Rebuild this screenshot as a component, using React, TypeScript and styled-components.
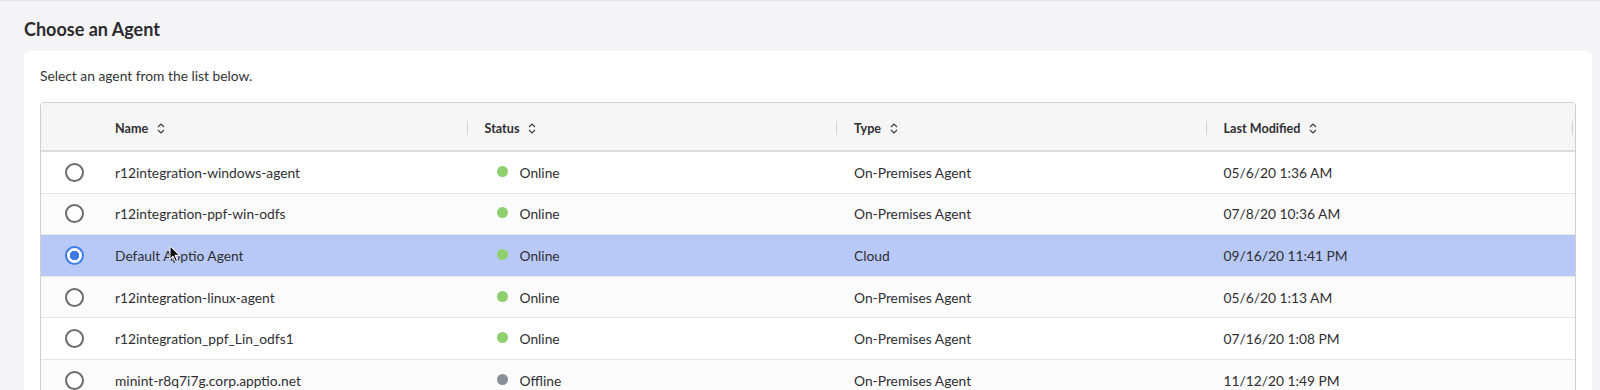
import React from "react";
import styled, { createGlobalStyle } from "styled-components";

interface Agent {
  name: string,
  status: "Online" | "Offline",
  type: string,
  modified: string,
}

const agents: Agent[] = [
  { name: "r12integration-windows-agent", status: "Online", type: "On-Premises Agent", modified: "05/6/20 1:36 AM" },
  { name: "r12integration-ppf-win-odfs", status: "Online", type: "On-Premises Agent", modified: "07/8/20 10:36 AM" },
  { name: "Default Apptio Agent", status: "Online", type: "Cloud", modified: "09/16/20 11:41 PM" },
  { name: "r12integration-linux-agent", status: "Online", type: "On-Premises Agent", modified: "05/6/20 1:13 AM" },
  { name: "r12integration_ppf_Lin_odfs1", status: "Online", type: "On-Premises Agent", modified: "07/16/20 1:08 PM" },
  { name: "minint-r8q7i7g.corp.apptio.net", status: "Offline", type: "On-Premises Agent", modified: "11/12/20 1:49 PM" },
];

const GlobalStyle = createGlobalStyle`
  body {
    margin: 0;
    background: #f5f5f7;
    font-family: Lato, "Open Sans", sans-serif;
    color: #2f2f33;
  }
`;

const Page = styled.div`
  border-top: 1px solid #e4e4e7;
  padding: 0 8px 0 24px;
`;

const Title = styled.h2`
  margin: 0;
  padding: 18px 0 12px;
  font-size: 18px;
  font-weight: 700;
  line-height: 20px;
  color: #2b2b2f;
`;

const Card = styled.div`
  background: white;
  border-radius: 6px;
  padding: 16px 16px 24px;
`;

const Hint = styled.p`
  margin: 0 0 17px;
  font-size: 13.8px;
  line-height: 18px;
  color: #333;
`;

const Table = styled.div`
  position: relative;
  border: 1px solid #cfcfd2;
  border-radius: 4px;
  overflow: hidden;
`;

const Row = styled.div<{ $selected?: boolean, $alt?: boolean }>`
  display: grid;
  grid-template-columns: 56px repeat(4, 1fr);
  align-items: center;
  height: 40.6px;
  border-bottom: 1px solid #e5e5e8;
  background: ${p => p.$selected ? "#b8c9f7" : p.$alt ? "#fbfbfb" : "white"};
  font-size: 13.8px;
  color: #2f2f33;
`;

const HeaderRow = styled(Row)`
  box-sizing: border-box;
  height: 49px;
  padding-top: 3px;
  background: #f6f6f6;
  border-bottom: 2px solid #dcdcdf;
  font-size: 12.6px;
  font-weight: 700;
`;

const HeadCell = styled.div<{ $divider?: boolean }>`
  position: relative;
  display: flex;
  align-items: center;
  gap: 9px;
  padding-left: 18px;
  ${p => p.$divider ? `
    &::before {
      content: "";
      position: absolute;
      left: 0;
      top: 50%;
      height: 14px;
      margin-top: -7px;
      border-left: 1px solid #d3d3d6;
    }
  ` : ""}
  &:last-child::after {
    content: "";
    position: absolute;
    right: 2px;
    top: 50%;
    height: 14px;
    margin-top: -7px;
    border-left: 1px solid #d3d3d6;
  }
`;

const Cell = styled.div`
  display: flex;
  align-items: center;
  padding-left: 18px;
  white-space: nowrap;
`;

const RadioCell = styled.div`
  display: flex;
  justify-content: center;
  padding-left: 11px;
`;

const Radio = styled.span<{ $checked?: boolean }>`
  box-sizing: border-box;
  width: 19px;
  height: 19px;
  border-radius: 50%;
  border: 2px solid ${p => p.$checked ? "#3d7bea" : "#6b6b70"};
  background: ${p => p.$checked ? "radial-gradient(circle, #3d7bea 0 4.5px, white 5px)" : "white"};
`;

const StatusCell = styled(Cell)`
  padding-left: 30px;
  gap: 12px;
`;

const Dot = styled.span<{ $online: boolean }>`
  width: 11px;
  height: 11px;
  border-radius: 50%;
  background: ${p => p.$online ? "#8fd06e" : "#8a8e96"};
  margin-top: -2px;
`;

const Pointer = styled.svg`
  position: absolute;
  left: 128px;
  top: 142px;
  pointer-events: none;
`;

const SortIcon = () => (
  <svg width="8" height="11" viewBox="0 0 8 11" fill="none" stroke="#3a3a3e" strokeWidth="1.1">
    <path d="M1 4 L4 1 L7 4" />
    <path d="M1 7 L4 10 L7 7" />
  </svg>
);

const App: React.FC = () => {
  return (
    <Page>
      <GlobalStyle />
      <Title>Choose an Agent</Title>
      <Card>
        <Hint>Select an agent from the list below.</Hint>
        <Table>
          <HeaderRow>
            <div />
            <HeadCell>Name <SortIcon /></HeadCell>
            <HeadCell $divider>Status <SortIcon /></HeadCell>
            <HeadCell $divider>Type <SortIcon /></HeadCell>
            <HeadCell $divider>Last Modified <SortIcon /></HeadCell>
          </HeaderRow>
          {agents.map((agent, i) => (
            <Row key={agent.name} $selected={i === 2} $alt={i % 2 === 1}>
              <RadioCell><Radio $checked={i === 2} /></RadioCell>
              <Cell>{agent.name}</Cell>
              <StatusCell>
                <Dot $online={agent.status === "Online"} />
                {agent.status}
              </StatusCell>
              <Cell>{agent.type}</Cell>
              <Cell>{agent.modified}</Cell>
            </Row>
          ))}
          <Pointer width="12" height="18" viewBox="0 0 12 18">
            <path d="M1 1 L1 14 L4 11 L6.5 16.5 L8.5 15.6 L6 10.3 L10.5 10.3 Z" fill="#111" stroke="white" strokeWidth="1" />
          </Pointer>
        </Table>
      </Card>
    </Page>
  );
}

export default App;
